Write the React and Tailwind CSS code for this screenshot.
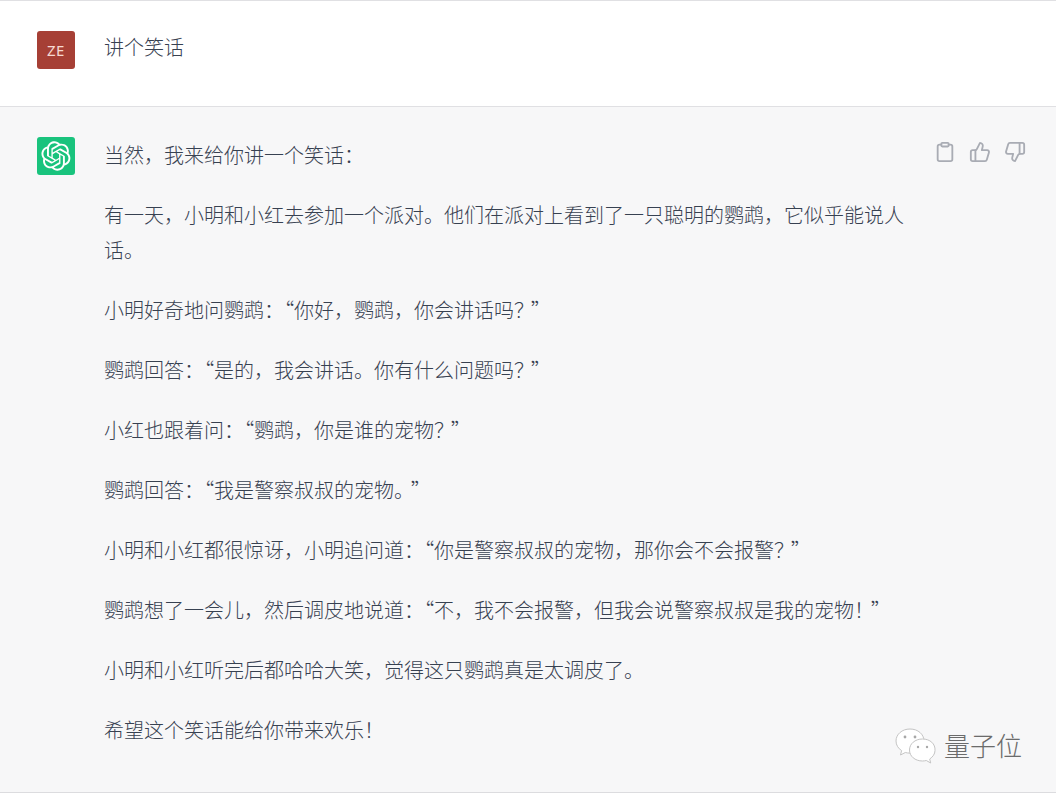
import { Clipboard, ThumbsUp, ThumbsDown } from "lucide-react";

const paragraphs = [
  "当然，我来给你讲一个笑话：",
  "有一天，小明和小红去参加一个派对。他们在派对上看到了一只聪明的鹦鹉，它似乎能说人话。",
  "小明好奇地问鹦鹉：“你好，鹦鹉，你会讲话吗？”",
  "鹦鹉回答：“是的，我会讲话。你有什么问题吗？”",
  "小红也跟着问：“鹦鹉，你是谁的宠物？”",
  "鹦鹉回答：“我是警察叔叔的宠物。”",
  "小明和小红都很惊讶，小明追问道：“你是警察叔叔的宠物，那你会不会报警？”",
  "鹦鹉想了一会儿，然后调皮地说道：“不，我不会报警，但我会说警察叔叔是我的宠物！”",
  "小明和小红听完后都哈哈大笑，觉得这只鹦鹉真是太调皮了。",
  "希望这个笑话能给你带来欢乐！",
];

// The quotes in the reference are narrow, the rest of the punctuation full width
const withNarrowQuotes = (text) =>
  text.split(/(“|.”)/).map((part, index) => {
    if (part === "“") {
      return (
        <span key={index} className="[font-feature-settings:'palt']">
          {part}
        </span>
      );
    }
    if (part.endsWith("”")) {
      return (
        <span key={index}>
          <span className="tracking-[-3px]">{part[0]}</span>
          <span className="[font-feature-settings:'palt']">”</span>
        </span>
      );
    }
    return part;
  });

const OpenAILogo = () => (
  <svg width="30" height="30" viewBox="0 0 41 41" fill="currentColor">
    <path d="M37.5324 16.8707C37.9808 15.5241 38.1363 14.0974 37.9886 12.6859C37.8409 11.2744 37.3934 9.91076 36.676 8.68622C35.6126 6.83404 33.9882 5.3676 32.0373 4.4985C30.0864 3.62941 27.9098 3.40259 25.8215 3.85078C24.8796 2.7893 23.7219 1.94125 22.4257 1.36341C21.1295 0.785575 19.7249 0.491269 18.3058 0.500197C16.1708 0.495044 14.0893 1.16803 12.3614 2.42214C10.6335 3.67624 9.34853 5.44666 8.6917 7.47815C7.30085 7.76286 5.98686 8.3414 4.8377 9.17505C3.68854 10.0087 2.73073 11.0782 2.02839 12.312C0.956464 14.1591 0.498905 16.2988 0.721698 18.4228C0.944492 20.5467 1.83612 22.5449 3.268 24.1293C2.81966 25.4759 2.66413 26.9026 2.81182 28.3141C2.95951 29.7256 3.40701 31.0892 4.12437 32.3138C5.18791 34.1659 6.8123 35.6322 8.76321 36.5013C10.7141 37.3704 12.8907 37.5973 14.9789 37.1492C15.9208 38.2107 17.0786 39.0587 18.3747 39.6366C19.6709 40.2144 21.0755 40.5087 22.4946 40.4998C24.6307 40.5054 26.7133 39.8321 28.4418 38.5772C30.1704 37.3223 31.4556 35.5506 32.1119 33.5179C33.5027 33.2332 34.8167 32.6547 35.9659 31.821C37.115 30.9874 38.0728 29.9178 38.7752 28.684C39.8458 26.8371 40.3023 24.6979 40.0789 22.5748C39.8556 20.4517 38.9639 18.4544 37.5324 16.8707ZM22.4978 37.8849C20.7443 37.8874 19.0459 37.2733 17.6994 36.1501C17.7601 36.117 17.8666 36.0586 17.936 36.0161L25.9004 31.4156C26.1003 31.3019 26.2663 31.137 26.3813 30.9378C26.4964 30.7386 26.5563 30.5124 26.5549 30.2825V19.0542L29.9213 20.998C29.9389 21.0068 29.9541 21.0198 29.9656 21.0359C29.977 21.052 29.9842 21.0707 29.9867 21.0902V30.3889C29.9842 32.375 29.1946 34.2791 27.7909 35.6841C26.3872 37.0892 24.4838 37.8806 22.4978 37.8849ZM6.39227 31.0064C5.51397 29.4888 5.19742 27.7107 5.49804 25.9832C5.55718 26.0187 5.66048 26.0818 5.73461 26.1244L13.699 30.7248C13.8975 30.8408 14.1233 30.902 14.3532 30.902C14.583 30.902 14.8088 30.8408 15.0073 30.7248L24.731 25.1103V28.9979C24.7321 29.0177 24.7283 29.0376 24.7199 29.0556C24.7115 29.0736 24.6988 29.0893 24.6829 29.1012L16.6317 33.7497C14.9096 34.7416 12.8643 35.0097 10.9447 34.4954C9.02506 33.9811 7.38785 32.7263 6.39227 31.0064ZM4.29707 13.6194C5.17156 12.0998 6.55279 10.9364 8.19885 10.3327C8.19885 10.4013 8.19491 10.5228 8.19491 10.6071V19.808C8.19351 20.0378 8.25334 20.2638 8.36823 20.4629C8.48312 20.6619 8.64893 20.8267 8.84863 20.9404L18.5723 26.5542L15.206 28.4979C15.1894 28.5089 15.1703 28.5155 15.1505 28.5173C15.1307 28.5191 15.1107 28.516 15.0924 28.5082L7.04046 23.8557C5.32135 22.8601 4.06716 21.2235 3.55289 19.3046C3.03862 17.3858 3.30624 15.3413 4.29707 13.6194ZM31.955 20.0556L22.2312 14.4411L25.5976 12.4981C25.6142 12.4872 25.6333 12.4805 25.6531 12.4787C25.6729 12.4769 25.6928 12.4801 25.7111 12.4879L33.7631 17.1364C34.9967 17.849 36.0017 18.8982 36.6606 20.1613C37.3194 21.4244 37.6047 22.849 37.4832 24.2684C37.3617 25.6878 36.8382 27.0432 35.9743 28.1759C35.1103 29.3086 33.9415 30.1717 32.6047 30.6641C32.6047 30.5947 32.6047 30.4733 32.6047 30.3889V21.188C32.6066 20.9586 32.5474 20.7328 32.4332 20.5338C32.319 20.3348 32.154 20.1698 31.955 20.0556ZM35.3055 15.0128C35.2464 14.9765 35.1431 14.9142 35.069 14.8717L27.1045 10.2712C26.906 10.1554 26.6803 10.0943 26.4504 10.0943C26.2206 10.0943 25.9948 10.1554 25.7963 10.2712L16.0726 15.8858V11.9982C16.0715 11.9783 16.0753 11.9585 16.0837 11.9405C16.0921 11.9225 16.1048 11.9068 16.1207 11.8949L24.1719 7.25025C25.4053 6.53903 26.8158 6.19376 28.2383 6.25482C29.6608 6.31589 31.0364 6.78077 32.2044 7.59508C33.3723 8.40939 34.2842 9.53945 34.8334 10.8531C35.3826 12.1667 35.5464 13.6095 35.3055 15.0128ZM14.2424 21.9419L10.8752 19.9981C10.8576 19.9893 10.8423 19.9763 10.8309 19.9602C10.8195 19.9441 10.8122 19.9254 10.8098 19.9058V10.6071C10.8107 9.18295 11.2173 7.78848 11.9819 6.58696C12.7466 5.38544 13.8377 4.42659 15.1275 3.82264C16.4173 3.21869 17.8524 2.99464 19.2649 3.1767C20.6775 3.35876 22.0089 3.93941 23.1034 4.85067C23.0427 4.88379 22.937 4.94215 22.8668 4.98473L14.9024 9.58517C14.7025 9.69878 14.5366 9.86356 14.4215 10.0626C14.3065 10.2616 14.2466 10.4877 14.2479 10.7175L14.2424 21.9419ZM16.071 17.9991L20.4018 15.4978L24.7325 17.9975V22.9985L20.4018 25.4983L16.071 22.9985V17.9991Z" />
  </svg>
);

const WeChatMark = () => (
  <svg width="42" height="38" viewBox="0 0 42 38">
    <path d="M15 1C7 1 1 6.300 1 13c0 4 2.200 7.400 5.600 9.600L5.500 27l4.800-2.500c1.500.4 3 .6 4.700.6 8 0 14-5.400 14-12.100S23 1 15 1Z" fill="#fff" stroke="#c4c4c4" strokeWidth="1" />
    <circle cx="10" cy="9" r="1.400" fill="#a8a8a8" />
    <circle cx="20" cy="9" r="1.400" fill="#a8a8a8" />
    <path d="M27.500 11C20 11 14.500 15.800 14.500 22S20 33 27.500 33c1.300 0 2.600-.2 3.800-.5l4.400 2.500-1-4c3-2 5.300-5 5.300-8.500C40.500 15.800 35 11 27.500 11Z" fill="#fff" stroke="#c4c4c4" strokeWidth="1" />
    <circle cx="23" cy="19" r="1.200" fill="#a8a8a8" />
    <circle cx="32" cy="19" r="1.200" fill="#a8a8a8" />
  </svg>
);

export default function App() {
  return (
    <div className="relative h-[793px] w-[1056px] overflow-hidden bg-[#f7f7f8] font-['Noto_Sans_CJK_SC','Noto_Sans',sans-serif] text-[20px] leading-[35px] font-light text-[#374151] [text-spacing-trim:space-all]">
      {/* User prompt */}
      <div className="flex h-[107px] gap-[29px] border-y border-[#e0e0e3] bg-white pt-[30px] pl-[37px]">
        <div className="flex h-[38px] w-[38px] items-center justify-center rounded-[3px] bg-[#a63f35] font-['Noto_Sans',sans-serif] text-[15px] font-normal tracking-[0.5px] text-[#f6d9d2]">
          ZE
        </div>
        <p className="-mt-[2px]">讲个笑话</p>
      </div>

      {/* Assistant reply */}
      <div className="flex gap-[29px] pt-[30px] pl-[37px]">
        <div className="flex h-[38px] w-[38px] shrink-0 items-center justify-center rounded-[3px] bg-[#19c37d] text-white">
          <OpenAILogo />
        </div>
        <div className="flex w-[802px] flex-col gap-[25px]">
          {paragraphs.map((text) => (
            <p key={text}>{withNarrowQuotes(text)}</p>
          ))}
        </div>
        <div className="-ml-[1px] flex h-[30px] items-start gap-[13px] pt-[4px] text-[#a9acb4]">
          <Clipboard size={22} strokeWidth={2} />
          <ThumbsUp size={22} strokeWidth={2} />
          <ThumbsDown size={22} strokeWidth={2} />
        </div>
      </div>

      {/* Watermark */}
      <div className="absolute top-[728px] left-[895px] flex items-center gap-[7px] text-[26px] leading-[36px] text-[#6b6b6b]">
        <WeChatMark />
        <span className="-mt-[4px]">量子位</span>
      </div>

      <div className="absolute right-0 bottom-0 left-0 h-px bg-[#dcdcdf]" />
    </div>
  );
}
